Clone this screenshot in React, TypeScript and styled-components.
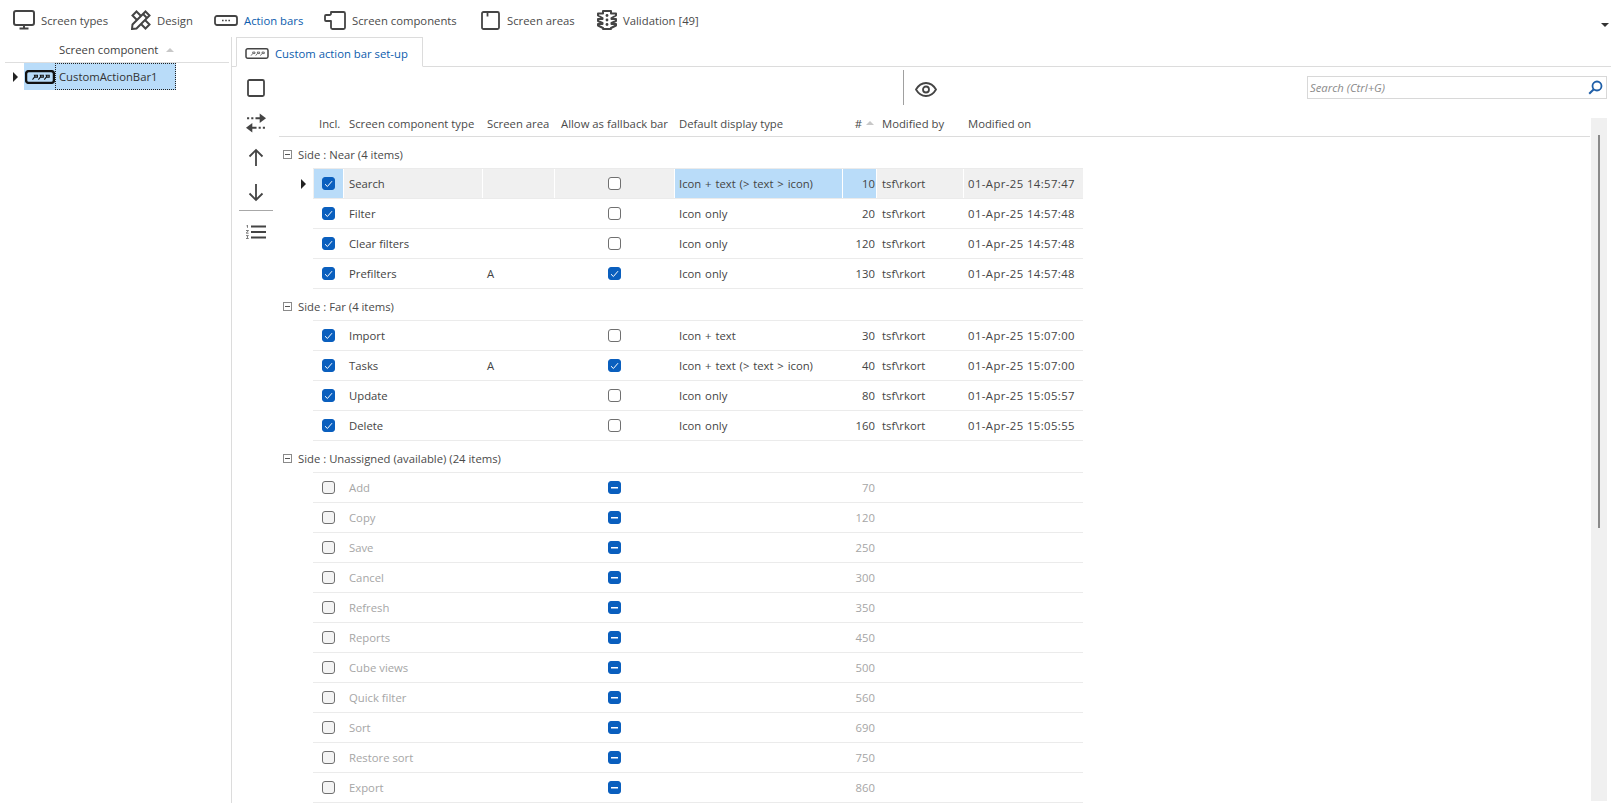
import React from "react";
import styled, { createGlobalStyle, css } from "styled-components";

const GlobalStyle = createGlobalStyle`
  html, body { margin: 0; padding: 0; background: #fff; }
  body { overflow: hidden; }
`;

const Page = styled.div`
  width: 100%;
  height: 100vh;
  display: flex;
  flex-direction: column;
  overflow: hidden;
  font-family: "Open Sans", "Noto Sans", sans-serif;
  font-size: 11.3px;
  color: #404040;
`;

const TopBar = styled.div`
  height: 37px;
  flex: none;
  display: flex;
  align-items: center;
  padding: 3px 8px 0 13px;
  box-sizing: border-box;
`;

const TopItem = styled.div<{ $active?: boolean; $w: number; $gap?: number }>`
  width: ${(p) => p.$w}px;
  display: flex;
  align-items: center;
  gap: ${(p) => p.$gap ?? 6}px;
  white-space: nowrap;
  color: ${(p) => (p.$active ? "#0b5cad" : "#4a4a4a")};
`;

const MenuCaret = styled.div`
  margin-left: auto;
  margin-top: 9px;
  width: 0;
  height: 0;
  border-left: 4px solid transparent;
  border-right: 4px solid transparent;
  border-top: 4px solid #333;
`;

const Body = styled.div`
  flex: 1;
  min-height: 0;
  display: flex;
`;

const LeftPanel = styled.div`
  width: 232px;
  flex: none;
  box-sizing: border-box;
  border-right: 1px solid #dcdcdc;
`;

const LeftHeader = styled.div`
  height: 26px;
  margin: 0 2px 0 5px;
  padding-left: 54px;
  box-sizing: border-box;
  display: flex;
  align-items: center;
  gap: 8px;
  border-bottom: 1px solid #dedede;
`;

const SortUp = styled.span`
  width: 0;
  height: 0;
  border-left: 4px solid transparent;
  border-right: 4px solid transparent;
  border-bottom: 4px solid #c8c8c8;
`;

const TreeRow = styled.div`
  height: 27px;
  display: flex;
  align-items: center;
  padding-left: 13px;
`;

const RightCaret = styled.span`
  width: 0;
  height: 0;
  flex: none;
  border-top: 5px solid transparent;
  border-bottom: 5px solid transparent;
  border-left: 5px solid #222;
`;

const TreeIconCell = styled.div`
  width: 31px;
  height: 27px;
  margin-left: 6px;
  display: flex;
  align-items: center;
  justify-content: center;
  background: #b9dcf9;
`;

const TreeLabel = styled.div`
  width: 121px;
  height: 27px;
  box-sizing: border-box;
  padding-left: 4px;
  display: flex;
  align-items: center;
  background: #b9dcf9;
  outline: 1px dotted #222;
  outline-offset: -1px;
  color: #333;
`;

const RightPanel = styled.div`
  flex: 1;
  min-width: 0;
  display: flex;
  flex-direction: column;
  padding-right: 6px;
`;

const TabStrip = styled.div`
  height: 30px;
  flex: none;
  box-sizing: border-box;
  padding-left: 4px;
  border-bottom: 1px solid #dcdcdc;
`;

const Tab = styled.div`
  width: 187px;
  height: 30px;
  box-sizing: border-box;
  border: 1px solid #dcdcdc;
  border-bottom: 1px solid #fff;
  display: flex;
  align-items: center;
  gap: 6px;
  padding: 2px 0 0 8px;
  color: #0b5cad;
  background: #fff;
`;

const Content = styled.div`
  flex: 1;
  min-height: 0;
  display: flex;
`;

const ToolColumn = styled.div`
  width: 47px;
  flex: none;
  box-sizing: border-box;
  padding-top: 3px;
  display: flex;
  flex-direction: column;
  align-items: center;
`;

const ToolButton = styled.div`
  width: 100%;
  height: 35px;
  flex: none;
  display: flex;
  align-items: center;
  justify-content: center;
`;

const ToolDivider = styled.div`
  width: 34px;
  height: 1px;
  flex: none;
  background: #a8a8a8;
  margin-bottom: 3px;
`;

const Main = styled.div`
  flex: 1;
  min-width: 0;
  position: relative;
  display: flex;
  flex-direction: column;
`;

const FilterBar = styled.div`
  height: 41px;
  flex: none;
  display: flex;
  align-items: center;
  padding: 0 4px 0 624px;
  box-sizing: border-box;
`;

const BarDivider = styled.div`
  width: 1px;
  height: 35px;
  background: #a0a0a0;
  margin-right: 11px;
`;

const EyeSlot = styled.div`
  display: flex;
  margin-top: 3px;
`;

const SearchBox = styled.div`
  margin-left: auto;
  width: 300px;
  height: 23px;
  box-sizing: border-box;
  border: 1px solid #d8d8d8;
  display: flex;
  align-items: center;
  justify-content: space-between;
  padding: 0 3px 0 2px;
  font-style: italic;
  color: #8a8a8a;
`;

const columns = css`
  display: grid;
  grid-template-columns: 30px 139px 72px 120px 168px 34px 87px 119px;
`;

const HeaderRow = styled.div`
  ${columns}
  height: 29px;
  flex: none;
  box-sizing: border-box;
  margin-right: 21px;
  padding: 2px 0 0 35px;
  align-items: center;
  white-space: nowrap;
  border-bottom: 1px solid #dcdcdc;
  color: #4a4a4a;
`;

const HeadCell = styled.div<{ $right?: boolean; $pad?: number }>`
  padding-left: ${(p) => p.$pad ?? 5}px;
  display: flex;
  align-items: center;
  ${(p) => p.$right && "justify-content: flex-end; gap: 4px; padding: 0 3px 0 0;"}
`;

const GroupHeader = styled.div`
  position: relative;
  height: 32px;
  box-sizing: border-box;
  padding: 2px 0 0 4px;
  display: flex;
  align-items: center;
  gap: 6px;
  color: #4a4a4a;
  &::after {
    content: "";
    position: absolute;
    left: 34px;
    bottom: 0;
    width: 770px;
    height: 1px;
    background: #ebebeb;
  }
`;

const CollapseBox = styled.span`
  width: 9px;
  height: 9px;
  box-sizing: border-box;
  border: 1px solid #8a8a8a;
  display: flex;
  align-items: center;
  justify-content: center;
  &::before {
    content: "";
    width: 5px;
    height: 1px;
    background: #555;
  }
`;

const RowsBlock = styled.div`
  position: relative;
  flex: 1;
  min-height: 0;
  overflow: hidden;
`;

const Row = styled.div<{ $current?: boolean; $off?: boolean }>`
  ${columns}
  position: relative;
  width: 770px;
  height: 30px;
  box-sizing: border-box;
  margin-left: 34px;
  padding-left: 1px;
  white-space: nowrap;
  border-bottom: 1px solid #ebebeb;
  background: ${(p) => (p.$current ? "#f0f0f0" : "#fff")};
  color: ${(p) => (p.$off ? "#a6a6a6" : "#444")};
`;

const Cell = styled.div<{
  $sel?: boolean;
  $num?: boolean;
  $center?: boolean;
  $pad?: number;
  $current?: boolean;
}>`
  display: flex;
  align-items: center;
  box-sizing: border-box;
  padding-left: ${(p) => p.$pad ?? 5}px;
  border-right: 1px solid ${(p) => (p.$sel || p.$current ? "#fff" : "transparent")};
  ${(p) => p.$sel && "background: #b9dcf9;"}
  ${(p) => p.$num && "justify-content: flex-end; padding: 0 1px 0 0;"}
  ${(p) => p.$center && "justify-content: center; padding: 0;"}
`;

const DisplayCell = styled(Cell)`
  padding-left: 4px;
  white-space: pre;
  word-spacing: 0.9px;
`;

const DateCell = styled(Cell)`
  padding-left: 4px;
  letter-spacing: 0.42px;
`;

const RowCaret = styled(RightCaret)`
  position: absolute;
  left: -12px;
  top: 10px;
`;

const Check = styled.span<{ $state: "on" | "off" | "mixed"; $dim?: boolean }>`
  width: 13px;
  height: 13px;
  box-sizing: border-box;
  border-radius: 3px;
  display: flex;
  align-items: center;
  justify-content: center;
  border: 1px solid ${(p) => (p.$state === "off" ? "#707070" : "#0a5fbe")};
  background: ${(p) => (p.$state === "off" ? (p.$dim ? "#f4f4f4" : "#fff") : "#0a5fbe")};
`;

const ScrollTrack = styled.div`
  position: absolute;
  top: 51px;
  right: 4px;
  bottom: 2px;
  width: 16px;
  background: #f0f0f0;
`;

const ScrollThumb = styled.div`
  position: absolute;
  top: 17px;
  left: 7px;
  width: 2px;
  height: 393px;
  background: #8a8a8a;
`;

const ink = "#444";

const MonitorIcon = () => (
  <svg width="22" height="20" viewBox="0 0 22 20" fill="none" stroke={ink} strokeWidth="2">
    <rect x="1" y="1" width="20" height="14" rx="2" />
    <path d="M11 15v3M6.500 18.500h9" />
  </svg>
);

const DesignIcon = () => (
  <svg width="20" height="20" viewBox="0 0 20 20" fill="none" stroke={ink} strokeWidth="2">
    <path d="M5.500 1.500 18.500 14.500 14.500 18.500 1.500 5.500Z" />
    <path d="M14.500 1.500 18.500 5.500 5.500 18.500 1 19 1.500 14.500Z" fill="#fff" />
    <path d="M12 4l4 4" />
  </svg>
);

const BarIcon = () => (
  <svg width="24" height="11" viewBox="0 0 24 11" fill="none">
    <rect x="1" y="1" width="22" height="9" rx="2" stroke={ink} strokeWidth="1.800" />
    <path d="M8 5.500h1.600M11.200 5.500h1.600M14.400 5.500h1.600" stroke={ink} strokeWidth="1.600" />
  </svg>
);

const ComponentIcon = () => (
  <svg width="22" height="19" viewBox="0 0 22 19" fill="none" stroke={ink} strokeWidth="1.800" strokeLinejoin="round">
    <path d="M7 1H19.500a1.500 1.500 0 0 1 1.500 1.500V16.500a1.500 1.500 0 0 1-1.500 1.500H8.500a1.500 1.500 0 0 1-1.500-1.500V10H2a1 1 0 0 1-1-1V5a1 1 0 0 1 1-1h3.500a1.500 1.500 0 0 0 1.500-1.500Z" />
  </svg>
);

const AreaIcon = () => (
  <svg width="19" height="19" viewBox="0 0 19 19" fill="none" stroke={ink} strokeWidth="1.800" strokeLinejoin="round">
    <path d="M2.500 1H16.500a1.500 1.500 0 0 1 1.500 1.500V16.500a1.500 1.500 0 0 1-1.500 1.500H2.500A1.500 1.500 0 0 1 1 16.500V2.500A1.500 1.500 0 0 1 2.500 1Z" />
    <path d="M6.500 1V5.500" />
  </svg>
);

const LightIcon = () => (
  <svg width="20" height="20" viewBox="0 0 20 20" fill="none" stroke={ink} strokeWidth="2" strokeLinejoin="round">
    <path d="M6 1H14V3.500H19V5.500L14.500 8V9H19V11L14.500 13V14H19V15.500L14 18V19H6V18L1 15.500V14H5.500V13L1 11V9H5.500V8L1 5.500V3.500H6Z" />
    <circle cx="10" cy="5.500" r="1.400" fill={ink} stroke="none" />
    <circle cx="10" cy="10" r="1.400" fill={ink} stroke="none" />
    <circle cx="10" cy="14.500" r="1.400" fill={ink} stroke="none" />
  </svg>
);

// three little wrench marks, shared by the tab and tree icons
const Wrenches = ({ color, width }: { color: string; width: number }) => (
  <g stroke={color} strokeWidth={width} fill="none">
    <path d="M7 9 9.200 6.200M8.800 4.800h2.800v1.800H9.500Z" />
    <path d="M12.500 9 14.700 6.200M14.300 4.800h2.800v1.800H15Z" />
    <path d="M18 9 20.200 6.200M19.800 4.800h2.800v1.800H20.500Z" />
  </g>
);

const TabBarIcon = () => (
  <svg width="24" height="11" viewBox="0 0 28 13" fill="none">
    <rect x="1" y="1" width="26" height="11" rx="2" stroke={ink} strokeWidth="1.800" />
    <Wrenches color={ink} width={0.9} />
  </svg>
);

const TreeBarIcon = () => (
  <svg width="30" height="14" viewBox="0 0 28 13" fill="none">
    <rect x="1" y="1" width="26" height="11" rx="2.500" stroke="#111" strokeWidth="2.200" />
    <Wrenches color="#111" width={1} />
  </svg>
);

const SquareTool = () => (
  <svg width="18" height="18" viewBox="0 0 18 18" fill="none">
    <rect x="1" y="1" width="16" height="16" rx="1.500" stroke={ink} strokeWidth="1.800" />
  </svg>
);

const SwapTool = () => (
  <svg width="20" height="20" viewBox="0 0 19 18" fill="none" stroke={ink} strokeWidth="1.800">
    <path d="M1 4.500h2M5 4.500h2M9 4.500h6" />
    <path d="M13 0 19 4.500 13 9Z" fill={ink} stroke="none" />
    <path d="M4 13.500h6M12 13.500h2M16 13.500h2" />
    <path d="M6 9 0 13.500 6 18Z" fill={ink} stroke="none" />
  </svg>
);

const UpTool = () => (
  <svg width="16" height="19" viewBox="0 0 16 19" fill="none" stroke={ink} strokeWidth="1.800">
    <path d="M8 18V2M1.500 8.500 8 2l6.500 6.500" />
  </svg>
);

const DownTool = () => (
  <svg width="16" height="19" viewBox="0 0 16 19" fill="none" stroke={ink} strokeWidth="1.800">
    <path d="M8 1v16M1.500 10.500 8 17l6.500-6.500" />
  </svg>
);

const ListTool = () => (
  <svg width="20" height="14" viewBox="0 0 20 14" fill="none" stroke={ink}>
    <path d="M5 1.500h15M5 7h15M5 12.500h15" strokeWidth="1.800" />
    <path d="M.5 .8 1.500.2v2.600M0 5.500h2.500L.2 8.200h2.400M0 10.600h2.400L1 12l1.400 1.500H0" strokeWidth=".7" />
  </svg>
);

const EyeIcon = () => (
  <svg width="22" height="15" viewBox="0 0 22 15" fill="none" stroke={ink} strokeWidth="1.800">
    <path d="M1 7.500C3.500 3.200 7 1 11 1s7.500 2.200 10 6.500C18.500 11.800 15 14 11 14S3.500 11.800 1 7.500Z" />
    <circle cx="11" cy="7.500" r="3" />
  </svg>
);

const SearchIcon = () => (
  <svg width="15" height="15" viewBox="0 0 15 15" fill="none" stroke="#1f5fa8" strokeWidth="1.800">
    <circle cx="9" cy="6" r="4.500" />
    <path d="M5.800 9.200 1.200 13.800" strokeWidth="2" />
  </svg>
);

const CheckMark = () => (
  <svg width="9" height="8" viewBox="0 0 9 8" fill="none" stroke="#fff" strokeWidth="1">
    <path d="M1 4.200 3.400 6.500 8 1.200" />
  </svg>
);

const DashMark = () => (
  <svg width="7" height="2" viewBox="0 0 7 2">
    <rect width="7" height="1.500" fill="#fff" />
  </svg>
);

const CheckBox = ({ state, dim }: { state: "on" | "off" | "mixed"; dim?: boolean }) => (
  <Check $state={state} $dim={dim}>
    {state === "on" && <CheckMark />}
    {state === "mixed" && <DashMark />}
  </Check>
);

type Item = {
  name: string;
  area?: string;
  fallback?: boolean;
  display: string;
  num: number;
  on: string;
};

const full = "Icon + text (> text > icon)";

const near: Item[] = [
  { name: "Search", display: full, num: 10, on: "01-Apr-25 14:57:47" },
  { name: "Filter", display: "Icon only", num: 20, on: "01-Apr-25 14:57:48" },
  { name: "Clear filters", display: "Icon only", num: 120, on: "01-Apr-25 14:57:48" },
  { name: "Prefilters", area: "A", fallback: true, display: "Icon only", num: 130, on: "01-Apr-25 14:57:48" },
];

const far: Item[] = [
  { name: "Import", display: "Icon + text", num: 30, on: "01-Apr-25 15:07:00" },
  { name: "Tasks", area: "A", fallback: true, display: full, num: 40, on: "01-Apr-25 15:07:00" },
  { name: "Update", display: "Icon only", num: 80, on: "01-Apr-25 15:05:57" },
  { name: "Delete", display: "Icon only", num: 160, on: "01-Apr-25 15:05:55" },
];

const unassigned: [string, number][] = [
  ["Add", 70],
  ["Copy", 120],
  ["Save", 250],
  ["Cancel", 300],
  ["Refresh", 350],
  ["Reports", 450],
  ["Cube views", 500],
  ["Quick filter", 560],
  ["Sort", 690],
  ["Restore sort", 750],
  ["Export", 860],
];

function ItemRow({ item, current }: { item: Item; current?: boolean }) {
  return (
    <Row $current={current}>
      {current && <RowCaret />}
      <Cell $sel={current} $center>
        <CheckBox state="on" />
      </Cell>
      <Cell $current={current}>{item.name}</Cell>
      <Cell $current={current} $pad={4}>
        {item.area}
      </Cell>
      <Cell $current={current} $center>
        <CheckBox state={item.fallback ? "on" : "off"} />
      </Cell>
      <DisplayCell $sel={current}>{item.display}</DisplayCell>
      <Cell $sel={current} $num>
        {item.num}
      </Cell>
      <Cell $current={current}>tsf\rkort</Cell>
      <DateCell>{item.on}</DateCell>
    </Row>
  );
}

function Group({ title, items, first }: { title: string; items: Item[]; first?: boolean }) {
  return (
    <>
      <GroupHeader>
        <CollapseBox />
        {title}
      </GroupHeader>
      {items.map((item, i) => (
        <ItemRow key={item.name} item={item} current={first && i === 0} />
      ))}
    </>
  );
}

export default function App() {
  return (
    <Page>
      <GlobalStyle />
      <TopBar>
        <TopItem $w={118}>
          <MonitorIcon />
          Screen types
        </TopItem>
        <TopItem $w={83}>
          <DesignIcon />
          Design
        </TopItem>
        <TopItem $w={110} $active>
          <BarIcon />
          Action bars
        </TopItem>
        <TopItem $w={157}>
          <ComponentIcon />
          Screen components
        </TopItem>
        <TopItem $w={116} $gap={7}>
          <AreaIcon />
          Screen areas
        </TopItem>
        <TopItem $w={120}>
          <LightIcon />
          Validation [49]
        </TopItem>
        <MenuCaret />
      </TopBar>
      <Body>
        <LeftPanel>
          <LeftHeader>
            Screen component
            <SortUp />
          </LeftHeader>
          <TreeRow>
            <RightCaret />
            <TreeIconCell>
              <TreeBarIcon />
            </TreeIconCell>
            <TreeLabel>CustomActionBar1</TreeLabel>
          </TreeRow>
        </LeftPanel>
        <RightPanel>
          <TabStrip>
            <Tab>
              <TabBarIcon />
              Custom action bar set-up
            </Tab>
          </TabStrip>
          <Content>
            <ToolColumn>
              <ToolButton>
                <SquareTool />
              </ToolButton>
              <ToolButton>
                <SwapTool />
              </ToolButton>
              <ToolButton>
                <UpTool />
              </ToolButton>
              <ToolButton>
                <DownTool />
              </ToolButton>
              <ToolDivider />
              <ToolButton>
                <ListTool />
              </ToolButton>
            </ToolColumn>
            <Main>
              <FilterBar>
                <BarDivider />
                <EyeSlot>
                  <EyeIcon />
                </EyeSlot>
                <SearchBox>
                  Search (Ctrl+G)
                  <SearchIcon />
                </SearchBox>
              </FilterBar>
              <HeaderRow>
                <HeadCell>Incl.</HeadCell>
                <HeadCell>Screen component type</HeadCell>
                <HeadCell $pad={4}>Screen area</HeadCell>
                <HeadCell $pad={6}>Allow as fallback bar</HeadCell>
                <HeadCell $pad={4}>Default display type</HeadCell>
                <HeadCell $right>
                  #
                  <SortUp />
                </HeadCell>
                <HeadCell>Modified by</HeadCell>
                <HeadCell $pad={4}>Modified on</HeadCell>
              </HeaderRow>
              <RowsBlock>
                <Group title="Side : Near (4 items)" items={near} first />
                <Group title="Side : Far (4 items)" items={far} />
                <GroupHeader>
                  <CollapseBox />
                  Side : Unassigned (available) (24 items)
                </GroupHeader>
                {unassigned.map(([name, num]) => (
                  <Row key={name} $off>
                    <Cell $center>
                      <CheckBox state="off" dim />
                    </Cell>
                    <Cell>{name}</Cell>
                    <Cell />
                    <Cell $center>
                      <CheckBox state="mixed" />
                    </Cell>
                    <Cell />
                    <Cell $num>{num}</Cell>
                    <Cell />
                    <Cell />
                  </Row>
                ))}
              </RowsBlock>
              <ScrollTrack>
                <ScrollThumb />
              </ScrollTrack>
            </Main>
          </Content>
        </RightPanel>
      </Body>
    </Page>
  );
}
